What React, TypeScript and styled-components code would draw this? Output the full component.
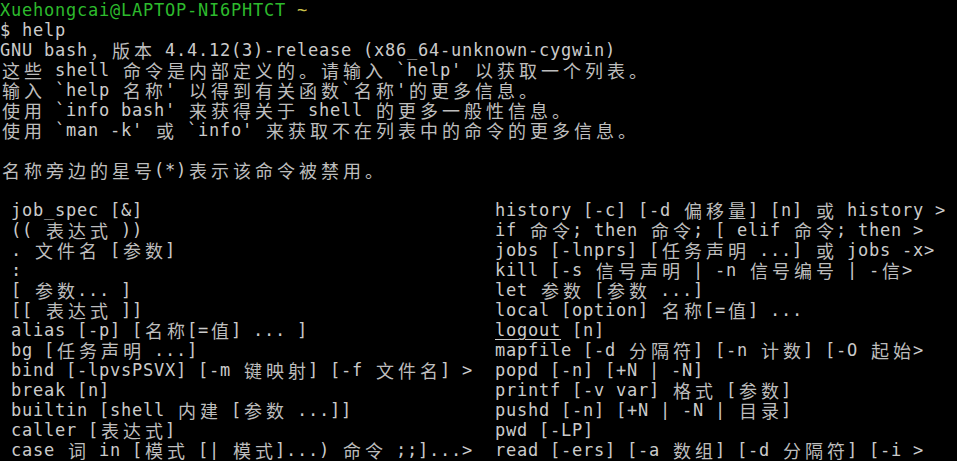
import React from "react";
import styled, { createGlobalStyle } from "styled-components";

const CELL = 11;

const GlobalStyle = createGlobalStyle`
  html, body {
    margin: 0;
    padding: 0;
    background: #000;
  }
  #root {
    width: 957px;
    height: 461px;
    overflow: hidden;
  }
`;

const Terminal = styled.div`
  background: #000;
  width: 957px;
  height: 461px;
  color: #cbcbcb;
  font-family: "DejaVu Sans Mono", "Liberation Mono", monospace;
  font-size: 17px;
  letter-spacing: 0.766px;
`;

const Line = styled.div`
  height: 20px;
  line-height: 20px;
  white-space: pre;
`;

const TwoCol = styled.div`
  display: grid;
  grid-template-columns: ${CELL * 45}px ${CELL * 42}px;
  height: 20px;
  line-height: 20px;
  white-space: pre;
`;

const LeftCell = styled.div`
  padding-left: ${CELL}px;
`;

const RightCell = styled.div``;

const Wide = styled.span`
  display: inline-block;
  vertical-align: top;
  width: ${CELL * 2}px;
  height: 20px;
  line-height: 20px;
  text-align: center;
  letter-spacing: 0;
  font-family: "Noto Sans CJK SC", "DejaVu Sans", sans-serif;
  font-size: 18px;
  color: #bdbdbd;
`;

const Prompt = styled.span<{ $c: string }>`
  color: ${(p) => p.$c};
`;

const Link = styled.span`
  text-decoration: underline;
  text-underline-offset: 3px;
`;

const WIDE_RE = /([\u2E80-\u9FFF\uFF00-\uFFEF]+)/;

function Txt({ s }: { s: string }) {
  const parts = s.split(WIDE_RE);
  return (
    <>
      {parts.map((part, i) =>
        i % 2 === 1
          ? Array.from(part).map((ch, j) => <Wide key={i + "-" + j}>{ch}</Wide>)
          : part && <span key={i}>{part}</span>
      )}
    </>
  );
}

const intro = [
  "$ help",
  "GNU bash，版本 4.4.12(3)-release (x86_64-unknown-cygwin)",
  "这些 shell 命令是内部定义的。请输入 `help' 以获取一个列表。",
  "输入 `help 名称' 以得到有关函数`名称'的更多信息。",
  "使用 `info bash' 来获得关于 shell 的更多一般性信息。",
  "使用 `man -k' 或 `info' 来获取不在列表中的命令的更多信息。",
  "",
  "名称旁边的星号(*)表示该命令被禁用。",
  "",
];

const rows: [string, string][] = [
  ["job_spec [&]", "history [-c] [-d 偏移量] [n] 或 history >"],
  ["(( 表达式 ))", "if 命令; then 命令; [ elif 命令; then >"],
  [". 文件名 [参数]", "jobs [-lnprs] [任务声明 ...] 或 jobs -x>"],
  [":", "kill [-s 信号声明 | -n 信号编号 | -信>"],
  ["[ 参数... ]", "let 参数 [参数 ...]"],
  ["[[ 表达式 ]]", "local [option] 名称[=值] ..."],
  ["alias [-p] [名称[=值] ... ]", "@logout [n]"],
  ["bg [任务声明 ...]", "mapfile [-d 分隔符] [-n 计数] [-O 起始>"],
  ["bind [-lpvsPSVX] [-m 键映射] [-f 文件名] >", "popd [-n] [+N | -N]"],
  ["break [n]", "printf [-v var] 格式 [参数]"],
  ["builtin [shell 内建 [参数 ...]]", "pushd [-n] [+N | -N | 目录]"],
  ["caller [表达式]", "pwd [-LP]"],
  ["case 词 in [模式 [| 模式]...) 命令 ;;]...>", "read [-ers] [-a 数组] [-d 分隔符] [-i >"],
];

export default function App() {
  return (
    <>
      <GlobalStyle />
      <Terminal>
        <Line>
          <Prompt $c="#2dba2d">Xuehongcai@LAPTOP-NI6PHTCT</Prompt>{" "}
          <Prompt $c="#c9c24a">~</Prompt>
        </Line>
        {intro.map((l, i) => (
          <Line key={i}>
            <Txt s={l} />
          </Line>
        ))}
        {rows.map(([a, b], i) => (
          <TwoCol key={i}>
            <LeftCell>
              <Txt s={a} />
            </LeftCell>
            <RightCell>
              {b.startsWith("@") ? (
                <>
                  <Link>logout</Link>
                  <Txt s={b.slice(7)} />
                </>
              ) : (
                <Txt s={b} />
              )}
            </RightCell>
          </TwoCol>
        ))}
      </Terminal>
    </>
  );
}
